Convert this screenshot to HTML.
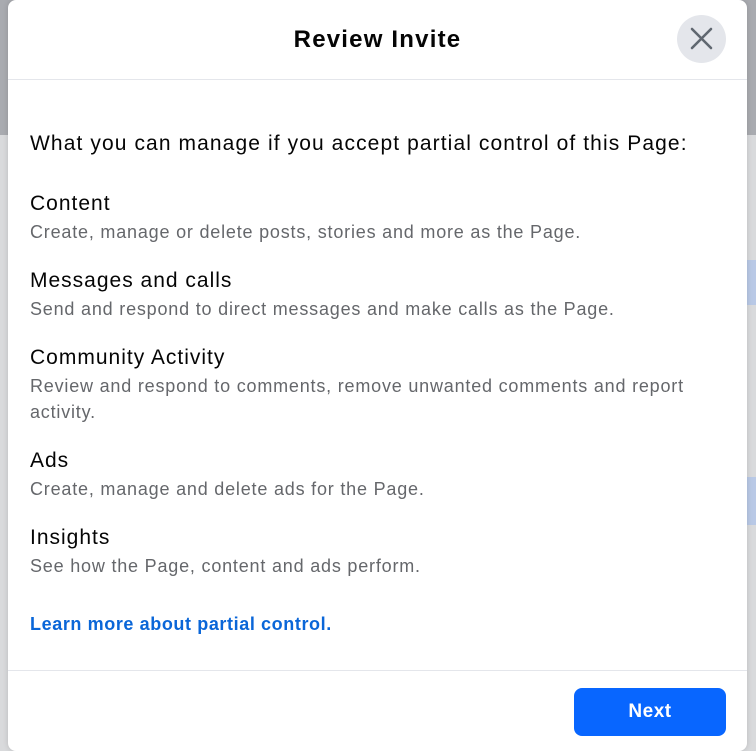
<!DOCTYPE html>
<html><head><style>
body{margin:0;width:756px;height:751px;overflow:hidden;position:relative;font-family:"Liberation Sans",sans-serif;background:#d9dadc;}
.bgtop{position:absolute;left:0;top:0;width:756px;height:135px;background:#a9abb0;}
.blue1{position:absolute;right:0;top:260px;width:20px;height:45px;background:#b9c9e6;}
.blue2{position:absolute;right:0;top:477px;width:20px;height:48px;background:#b9c9e6;}
.modal{position:absolute;left:8px;top:0;width:739px;height:751px;background:#fff;border-radius:8px;box-shadow:0 0 6px rgba(0,0,0,.15);}
.hdr{height:79px;border-bottom:1px solid #e4e6eb;position:relative;}
.hdr h1{margin:0;text-align:center;font-size:24px;font-weight:bold;line-height:79px;color:#050505;letter-spacing:1.2px;}
.close{position:absolute;left:669px;top:15px;width:49px;height:48px;border-radius:50%;background:#e4e6eb;}
.body{padding:0 22px;color:#050505;}
.q{font-size:21px;margin-top:51px;line-height:26px;letter-spacing:1.1px;}
.t{font-size:21px;line-height:26px;margin-top:23px;letter-spacing:1px;}
.d{font-size:18px;color:#65676b;line-height:26px;margin-top:2px;letter-spacing:0.8px;}
.link{color:#0a66d8;font-weight:bold;font-size:18px;position:absolute;left:22px;top:614px;letter-spacing:0.6px;}
.ftr{position:absolute;left:0;top:670px;width:739px;border-top:1px solid #e4e6eb;}
.btn{position:absolute;left:566px;top:688px;width:152px;height:48px;background:#0866ff;color:#fff;border-radius:8px;font-weight:bold;font-size:19px;text-align:center;line-height:48px;letter-spacing:0.5px;}
</style></head><body>
<div class="bgtop"></div><div class="blue1"></div><div class="blue2"></div>
<div class="modal">
<div class="hdr"><h1>Review Invite</h1>
<div class="close"><svg width="49" height="48" viewBox="0 0 49 48"><path d="M15 14L34 33M34 14L15 33" stroke="#606770" stroke-width="2.6" stroke-linecap="round"/></svg></div></div>
<div class="body">
<div class="q">What you can manage if you accept partial control of this Page:</div>
<div class="t" style="margin-top:34px">Content</div>
<div class="d">Create, manage or delete posts, stories and more as the Page.</div>
<div class="t">Messages and calls</div>
<div class="d">Send and respond to direct messages and make calls as the Page.</div>
<div class="t">Community Activity</div>
<div class="d">Review and respond to comments, remove unwanted comments and report activity.</div>
<div class="t">Ads</div>
<div class="d">Create, manage and delete ads for the Page.</div>
<div class="t">Insights</div>
<div class="d">See how the Page, content and ads perform.</div>
</div>
<div class="link">Learn more about partial control.</div>
<div class="ftr"></div>
<div class="btn">Next</div>
</div>
</body></html>
